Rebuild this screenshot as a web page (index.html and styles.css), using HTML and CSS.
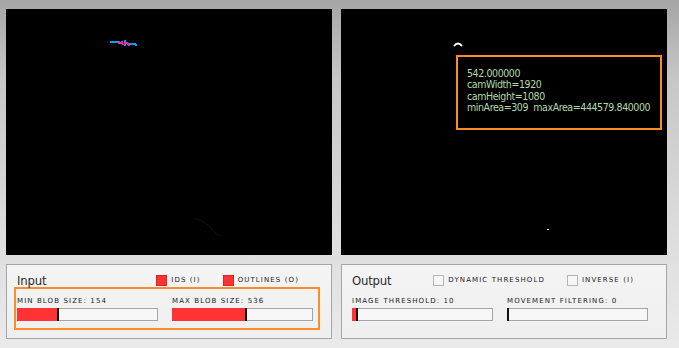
FILE: index.html
```html
<!DOCTYPE html>
<html lang="en">
  <head>
    <meta charset="UTF-8" />
    <title>Blob Tracker</title>
    <link rel="stylesheet" href="styles.css">
  </head>
  <body>
    <div class="stage">
      <div class="video">
        <svg class="frame" viewBox="0 0 326 246">
          <rect x="104" y="32" width="10" height="2" fill="#0a9cff" />
          <rect x="121" y="34" width="9" height="2" fill="#0a9cff" />
          <rect x="129" y="35" width="2" height="2" fill="#0a9cff" />
          <rect x="118" y="31" width="2" height="6" fill="#0a9cff" />
          <rect x="112" y="33" width="4" height="2" fill="#ff1fa8" />
          <rect x="115" y="32" width="2" height="3" fill="#ff1fa8" />
          <rect x="119" y="33" width="3" height="2" fill="#ff1fa8" />
          <rect x="122" y="35" width="2" height="2" fill="#ff1fa8" />
          <rect x="116" y="35" width="4" height="1" fill="#ff1fa8" />
          <path d="M187 209 Q200 212 206 220 T216 226" stroke="#111" stroke-width="1" fill="none" />
        </svg>
      </div>
      <div class="video">
        <svg class="frame" viewBox="0 0 326 246">
          <path d="M113 37 Q117 32 121 37" stroke="#fff" stroke-width="2" fill="none" />
          <rect x="206" y="220" width="2" height="1" fill="#fff" />
        </svg>
        <div class="info">
          <div>542.000000</div>
          <div>camWidth=1920</div>
          <div>camHeight=1080</div>
          <div>minArea=309&nbsp;&nbsp;maxArea=444579.840000</div>
        </div>
      </div>

      <div class="panel">
        <div class="panel-head">
          <span class="panel-title">Input</span>
          <div class="toggles">
            <label class="toggle"><span class="box on"></span>IDS (I)</label>
            <label class="toggle"><span class="box on"></span>OUTLINES (O)</label>
          </div>
        </div>
        <div class="sliders highlight">
          <div class="slider">
            <div class="slider-label">MIN BLOB SIZE: 154</div>
            <div class="track"><div class="fill" style="width: 30%"></div></div>
          </div>
          <div class="slider">
            <div class="slider-label">MAX BLOB SIZE: 536</div>
            <div class="track"><div class="fill" style="width: 54%"></div></div>
          </div>
        </div>
      </div>

      <div class="panel">
        <div class="panel-head">
          <span class="panel-title">Output</span>
          <div class="toggles">
            <label class="toggle"><span class="box"></span>DYNAMIC THRESHOLD</label>
            <label class="toggle"><span class="box"></span>INVERSE (I)</label>
          </div>
        </div>
        <div class="sliders">
          <div class="slider">
            <div class="slider-label">IMAGE THRESHOLD: 10</div>
            <div class="track"><div class="fill" style="width: 4%"></div></div>
          </div>
          <div class="slider">
            <div class="slider-label">MOVEMENT FILTERING: 0</div>
            <div class="track"><div class="fill" style="width: 0%"></div></div>
          </div>
        </div>
      </div>
    </div>
  </body>
</html>
```

FILE: styles.css
```css
html,
body {
  margin: 0;
  height: 100%;
}
body {
  padding: 9px 12px 0 6px;
  box-sizing: border-box;
  background: linear-gradient(#a5a5a5 0, #c6c6c6 22%, #dcdcdc 65%, #eaeaea 100%);
  font-family: "DejaVu Sans Condensed", "DejaVu Sans", sans-serif;
  font-stretch: condensed;
}
.stage {
  display: grid;
  grid-template-columns: 326px 326px;
  grid-template-rows: 246px auto;
  column-gap: 9px;
  row-gap: 9px;
}
.video {
  position: relative;
  background-color: #000;
}
.frame {
  display: block;
  width: 100%;
  height: 100%;
}
.info {
  position: absolute;
  left: 115px;
  top: 46px;
  width: 206px;
  height: 75px;
  box-sizing: border-box;
  border: 2px solid #ff8a28;
  padding: 11px 0 0 9px;
  color: #b2d9ac;
  font-size: 10.5px;
  line-height: 11.4px;
  letter-spacing: -0.4px;
  white-space: nowrap;
}
.panel {
  background: linear-gradient(#f4f4f4, #efefef);
  border: 1px solid #a6a6a6;
  padding: 8px 11px 8px 7px;
}
.panel-head {
  display: flex;
  align-items: center;
  height: 14px;
}
.panel-title {
  padding-left: 3px;
  font-size: 13px;
  letter-spacing: -0.2px;
  color: #2a2a2a;
}
.toggles {
  display: flex;
  gap: 22px;
  margin-left: auto;
  padding-right: 21px;
}
.toggle,
.slider-label {
  font-family: "DejaVu Sans", sans-serif;
  font-stretch: normal;
  font-size: 7px;
  letter-spacing: 1.1px;
  color: #1a1a1a;
}
.toggle {
  display: flex;
  align-items: center;
  gap: 4px;
}
.box {
  width: 11px;
  height: 11px;
  box-sizing: border-box;
  border: 1px solid #b4b4b4;
  background-color: #f6f6f6;
}
.box.on {
  border-color: #d42626;
  background-color: #ff3333;
}
.sliders {
  display: grid;
  grid-template-columns: 141px 141px;
  column-gap: 14px;
  border: 2px solid transparent;
  padding: 8px 6px 7px 1px;
}
.sliders.highlight {
  border-color: #ff8a28;
}
.slider-label {
  line-height: 9px;
  margin-bottom: 2px;
}
.track {
  height: 13px;
  box-sizing: border-box;
  border: 1px solid #a4a4a4;
  background-color: #f7f7f7;
}
.fill {
  height: 13px;
  box-sizing: border-box;
  background-color: #ff3333;
  border-right: 2px solid #111;
  margin: -1px 0 0 -1px;
}
```
